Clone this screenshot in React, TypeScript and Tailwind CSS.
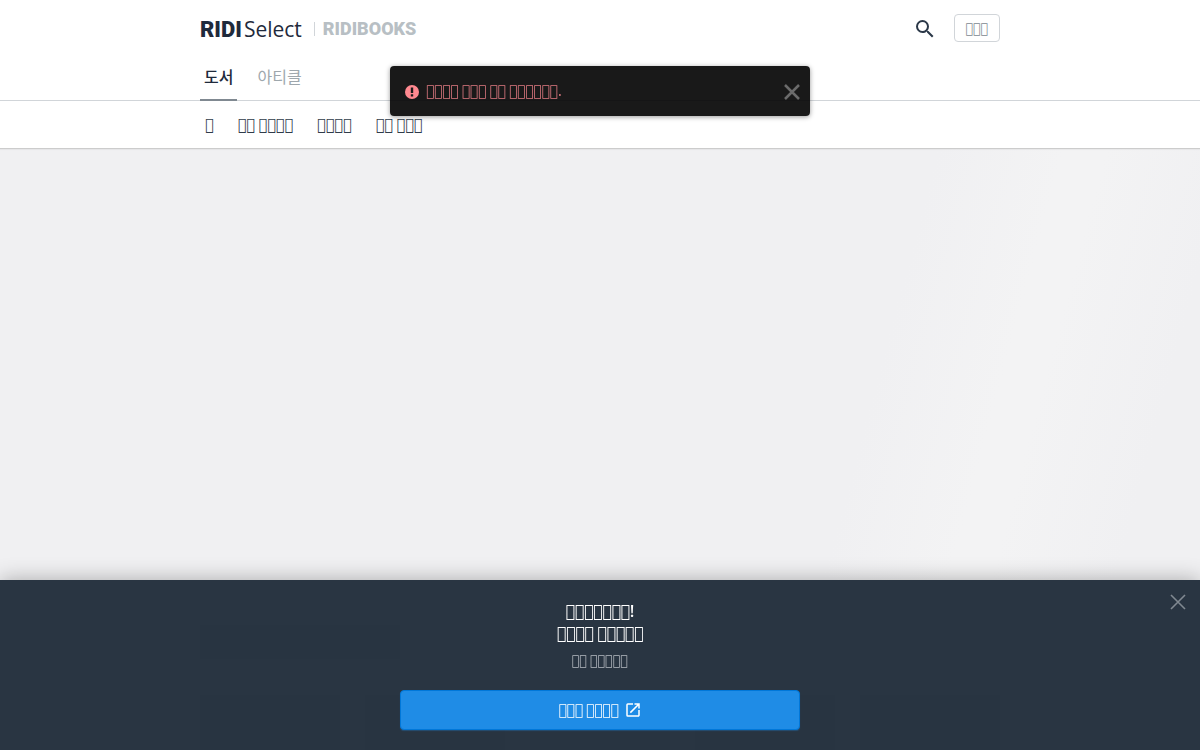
import { MdOpenInNew, MdSearch } from "react-icons/md";

const BOX = "\uE0F0";
const boxes = (...counts: number[]) => counts.map((n) => BOX.repeat(n)).join("\u2005");

const menu = [boxes(1), boxes(2, 4), boxes(4), boxes(2, 3)];

function Cross({ className }: { className: string }) {
  return (
    <svg viewBox="0 0 16 16" className={className} fill="none" stroke="currentColor" aria-hidden="true">
      <path d="M1 1 L15 15 M15 1 L1 15" />
    </svg>
  );
}

function Alert({ className }: { className: string }) {
  return (
    <svg viewBox="0 0 14 14" className={className} aria-hidden="true">
      <circle cx="7" cy="7" r="7" fill="currentColor" />
      <path d="M5.8 2.5h2.4v5.4H5.8zM5.8 9.2h2.4v2.2H5.8z" fill="#1a1a1a" />
    </svg>
  );
}

function Header() {
  return (
    <header className="relative z-10 border-b border-[#cccccc] bg-white shadow-[0_1px_1px_rgba(0,0,0,0.04)]">
      <div className="mx-auto flex h-14 max-w-[800px] items-center justify-between">
        <div className="flex items-center pt-0.5">
          <a href="#select" className="flex items-baseline gap-0.5 leading-7 text-[#1f2a3c]">
            <span className="font-[Roboto] text-[22px] font-black">RIDI</span>
            <span className="font-['Open_Sans',sans-serif] text-[21px]">Select</span>
          </a>
          <span className="ml-3 h-[14px] w-px bg-[#d1d5d9]" />
          <a href="#books" className="ml-2 font-[Roboto] text-[18px] leading-7 font-black text-[#b8bfc4]">
            RIDIBOOKS
          </a>
        </div>
        <div className="flex items-center gap-[17px]">
          <button type="button" aria-label="Search" className="pt-0.5 text-[#2b3848]">
            <MdSearch className="size-6" />
          </button>
          <button
            type="button"
            className="h-7 w-[46px] rounded-sm border border-[#d1d5d9] text-center text-[14px] leading-4 text-[#808991]"
          >
            {boxes(3)}
          </button>
        </div>
      </div>
      <nav className="border-b border-[#d1d5d9]">
        <div className="mx-auto flex h-11 max-w-[800px] gap-4 font-['Noto_Sans_CJK_KR',sans-serif] text-base">
          <a href="#book" className="-mb-px border-b-2 border-[#808991] px-1 pt-2 font-medium text-[#1f2a3c]">
            도서
          </a>
          <a href="#article" className="px-1 pt-2 text-[#9ea7ad]">
            아티클
          </a>
        </div>
      </nav>
      <nav className="mx-auto flex h-[47px] max-w-[800px] items-center gap-6 px-[5px] text-base text-[#303c4a]">
        {menu.map((label, i) => (
          <a key={i} href="#menu">
            {label}
          </a>
        ))}
      </nav>
    </header>
  );
}

function Toast() {
  return (
    <div
      role="alert"
      className="fixed top-[66px] left-1/2 z-20 flex h-[50px] w-[420px] -translate-x-1/2 items-center rounded bg-black/90 pt-px pr-2.5 pl-[15px] shadow-[0_1px_5px_rgba(0,0,0,0.4)]"
    >
      <Alert className="size-3.5 text-[#ff8990]" />
      <p className="ml-[7px] flex-1 text-[15px] text-[#e07a82]">{boxes(4, 3, 2, 6)}.</p>
      <button type="button" aria-label="Close" className="text-[#6b6b6b]">
        <Cross className="size-4 stroke-[2.5]" />
      </button>
    </div>
  );
}

function Placeholder() {
  return (
    <main className="flex-1 bg-[linear-gradient(105deg,#f0f0f2_67%,#f3f3f4_76%,#f3f3f4_79%,#f0f0f2_88%)]">
      <div className="mx-auto max-w-[800px] pt-[476px]">
        <div className="h-[34px] w-[200px] bg-[#dcdcdc]" />
        <div className="mt-9 grid grid-cols-5 gap-[25px]">
          {[0, 1, 2, 3, 4].map((n) => (
            <div key={n} className="h-[200px] bg-[#dcdcdc]" />
          ))}
        </div>
      </div>
    </main>
  );
}

function Banner() {
  return (
    <section className="fixed inset-x-0 bottom-0 z-20 bg-[#1e2a38]/95 py-5 text-center shadow-[0_0_20px_rgba(0,0,0,0.3)]">
      <h2 className="text-[17px] leading-[22px] text-white">
        {boxes(7)}
        <span className="font-['Noto_Sans',sans-serif] font-medium">!</span>
        <br />
        {boxes(4, 5)}
      </h2>
      <p className="mt-2 text-[14px] leading-4 text-[#b5bac0]">{boxes(2, 5)}</p>
      <a
        href="#start"
        className="mx-auto mt-[22px] flex h-10 max-w-[400px] items-center justify-center gap-[5px] rounded border border-[#0077d9] bg-[#1f8ce6] text-[15px] text-white shadow-[0_1px_1px_rgba(31,140,230,0.3)]"
      >
        {boxes(3, 4)}
        <MdOpenInNew className="size-[18px]" />
      </a>
      <button type="button" aria-label="Close banner" className="absolute top-3.5 right-3.5 text-[#808991]">
        <Cross className="size-4 stroke-[1.6]" />
      </button>
    </section>
  );
}

export default function App() {
  return (
    <div className="flex h-screen flex-col overflow-hidden bg-white font-['DejaVu_Sans_Condensed',sans-serif]">
      <Header />
      <Placeholder />
      <Toast />
      <Banner />
    </div>
  );
}
